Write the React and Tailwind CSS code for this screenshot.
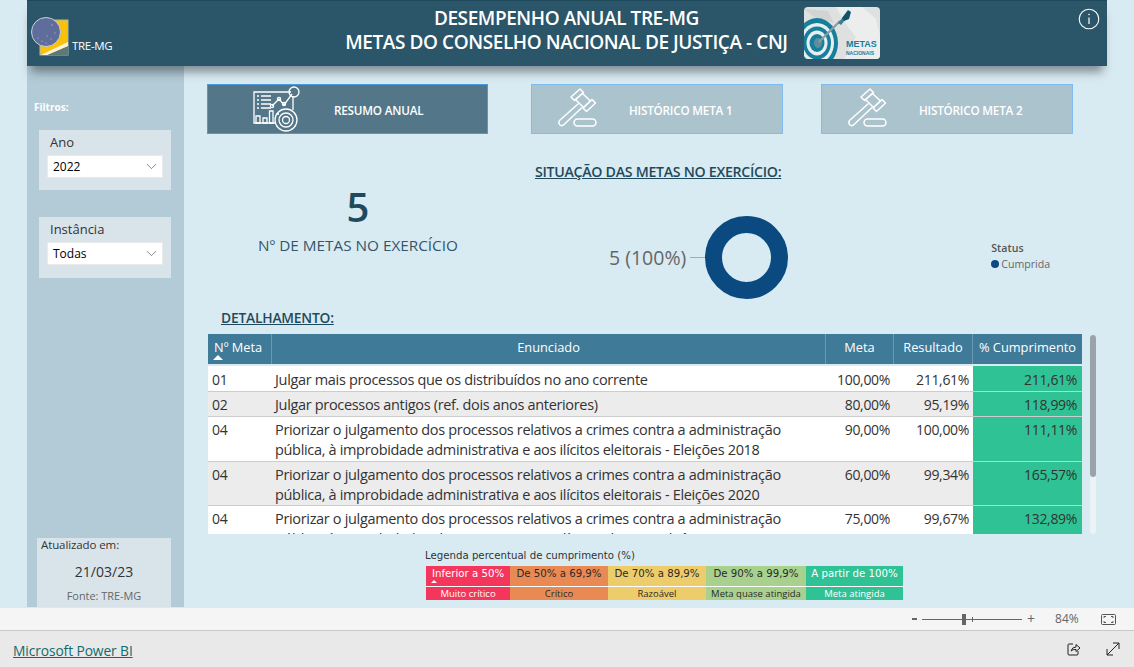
import { ChevronDown } from "lucide-react";

const rows = [
  { n: "01", lines: ["Julgar mais processos que os distribuídos no ano corrente"], meta: "100,00%", res: "211,61%", pct: "211,61%", h: "h-[26px]", pt: "pt-[4px]" },
  { n: "02", lines: ["Julgar processos antigos (ref. dois anos anteriores)"], meta: "80,00%", res: "95,19%", pct: "118,99%", h: "h-[25px]", pt: "pt-[3px]" },
  {
    n: "04",
    lines: [
      "Priorizar o julgamento dos processos relativos a crimes contra a administração",
      "pública, à improbidade administrativa e aos ilícitos eleitorais - Eleições 2018",
    ],
    meta: "90,00%",
    res: "100,00%",
    pct: "111,11%",
    h: "h-[45px]",
    pt: "pt-[3px]",
  },
  {
    n: "04",
    lines: [
      "Priorizar o julgamento dos processos relativos a crimes contra a administração",
      "pública, à improbidade administrativa e aos ilícitos eleitorais - Eleições 2020",
    ],
    meta: "60,00%",
    res: "99,34%",
    pct: "165,57%",
    h: "h-[44px]",
    pt: "pt-[3px]",
  },
  {
    n: "04",
    lines: [
      "Priorizar o julgamento dos processos relativos a crimes contra a administração",
      "pública, à improbidade administrativa e aos ilícitos eleitorais (biênio 2019-2020)",
    ],
    meta: "75,00%",
    res: "99,67%",
    pct: "132,89%",
    h: "h-[44px]",
    pt: "pt-[3px]",
  },
];

const legend = [
  { top: "Inferior a 50%", bottom: "Muito crítico", w: "w-[84px]", bg: "bg-[#f5365c]", text: "text-white", sort: true },
  { top: "De 50% a 69,9%", bottom: "Crítico", w: "w-[98px]", bg: "bg-[#e98a54]", text: "text-[#2a2a2a]" },
  { top: "De 70% a 89,9%", bottom: "Razoável", w: "w-[98px]", bg: "bg-[#edcd6b]", text: "text-[#2a2a2a]" },
  { top: "De 90% a 99,9%", bottom: "Meta quase atingida", w: "w-[100px]", bg: "bg-[#a9d18e]", text: "text-[#2a2a2a]" },
  { top: "A partir de 100%", bottom: "Meta atingida", w: "w-[97px]", bg: "bg-[#2fc294]", text: "text-white" },
];

function Gavel() {
  return (
    <svg width="39" height="39" viewBox="0 0 39 39" fill="none" stroke="white" strokeWidth="1.5" strokeLinejoin="round" strokeLinecap="round">
      <path d="M13 9 L22 1 L25.5 4.5 L16.5 12.5 Z" />
      <path d="M17.5 11.5 L24.5 5.5 L32.5 13 L25.5 19.5 Z" />
      <path d="M25 20 L34 11.5 L37.5 15 L28.5 23.5 Z" />
      <path d="M20 16 L1.5 32.5 Q0 35 2 37 Q4 38.5 6 36.5 L23.5 20" />
      <rect x="16" y="31" width="22" height="7" rx="3.5" />
    </svg>
  );
}

function ChartIcon() {
  return (
    <svg width="48" height="46" viewBox="0 0 48 46" fill="none" stroke="white" strokeWidth="1.3">
      <path d="M38 6 H1 V37 H23" />
      <path d="M40 10 V24" />
      <path d="M4 10 H6 M4 14 H6 M4 18 H6 M4 22 H6" />
      <path d="M8 10 H18 M8 14 H18 M8 18 H18 M8 22 H18" />
      <path d="M3 30 H7 V37 H3 Z M10 32 H14 V37 H10 Z M16.5 25 H20 V37 H16.5 Z M23 28 H26" />
      <path d="M19 20 L26 13 L31 19 L39 8" />
      <circle cx="41" cy="6" r="5" />
      <circle cx="19" cy="20" r="1.6" />
      <circle cx="26" cy="13" r="1.6" />
      <circle cx="31" cy="18" r="1.6" />
      <circle cx="33" cy="34" r="11" />
      <circle cx="33" cy="34" r="7" />
      <circle cx="33" cy="34" r="3.5" />
    </svg>
  );
}

function TreLogo() {
  return (
    <svg width="40" height="44" viewBox="0 0 40 44">
      <rect x="10" y="6" width="28" height="35" fill="#f9c20a" stroke="#aab6b8" />
      <path d="M17 41 L38 32 V41 Z" fill="#5d7876" />
      <path d="M11 41 L38 28 V32 L17 41 Z" fill="#f7f3df" />
      <circle cx="16" cy="18" r="14.5" fill="#5e6d9c" stroke="#c6ced6" strokeWidth="1" />
      <circle cx="22" cy="11" r="0.5" fill="#fff" />
      <circle cx="17" cy="22" r="0.5" fill="#d5dae8" />
      <circle cx="21" cy="25" r="0.5" fill="#d5dae8" />
      <circle cx="12" cy="27" r="0.5" fill="#d5dae8" />
      <circle cx="25" cy="19" r="0.5" fill="#d5dae8" />
      <circle cx="8" cy="24" r="0.5" fill="#d5dae8" />
      <circle cx="16" cy="29" r="0.5" fill="#d5dae8" />
    </svg>
  );
}

function MetasLogo() {
  return (
    <svg width="76" height="52" viewBox="0 0 76 52">
      <defs>
        <clipPath id="metas-clip">
          <rect width="76" height="52" rx="4" />
        </clipPath>
      </defs>
      <g clipPath="url(#metas-clip)">
        <rect width="76" height="52" fill="#dfe1e1" />
        <path d="M32 0 H58 L72 12 L76 28 V52 H40 L52 30 L44 20 Z" fill="#eceded" />
        <path d="M0 2 L24 4 L30 16 L10 10 Z" fill="#d2d4d4" />
        <ellipse cx="13" cy="36" rx="21" ry="25" fill="#157f9c" />
        <ellipse cx="13" cy="36" rx="17" ry="20" fill="#e8eeef" />
        <ellipse cx="13" cy="36" rx="14" ry="16.5" fill="#157f9c" />
        <ellipse cx="13" cy="36" rx="10.5" ry="12.5" fill="#e8eeef" />
        <ellipse cx="13" cy="36" rx="7.5" ry="9" fill="#157f9c" />
        <ellipse cx="14" cy="36" rx="4" ry="5" fill="#5f8d9c" />
        <path d="M15 35 L36 14" stroke="#8b9ca3" strokeWidth="2.2" />
        <path d="M34 16 L40 9 L41 13 L37 18 Z" fill="#3a7f95" />
        <path d="M38 11 L44 3 L47 5 L45 12 L40 14 Z" fill="#0f5468" />
        <text x="42" y="40" fontSize="9" fontWeight="700" fill="#157f9c" fontFamily="'Liberation Sans', sans-serif">METAS</text>
        <text x="42" y="48" fontSize="5" fontWeight="700" fill="#157f9c" fontFamily="'Liberation Sans', sans-serif">NACIONAIS</text>
      </g>
    </svg>
  );
}

function Dropdown({ label, value, cardClass }) {
  return (
    <div className={`mx-3 w-[132px] bg-[#d9e4ea] pr-[8px] pl-2 ${cardClass}`}>
      <div className="pl-[3px] text-[13px] leading-[18px] text-[#333]">{label}</div>
      <div className="mt-[4px] flex h-[23px] items-center justify-between border border-[#eaeaea] bg-white pr-[2px] pl-[5px] text-[12px] text-black">
        <span>{value}</span>
        <ChevronDown size={17} strokeWidth={1} className="text-[#555]" />
      </div>
    </div>
  );
}

function NavButton({ label, active, icon, widthClass, iconClass, textClass }) {
  return (
    <div className={`flex h-[50px] items-center border ${active ? "border-[#4a9ade] bg-[#537789]" : "border-[#7fbdf0] bg-[#abc3cd]"} ${widthClass}`}>
      <div className={`shrink-0 ${iconClass}`}>{icon}</div>
      <span className={`mt-[4px] text-[11.7px] font-semibold tracking-[-0.2px] text-white ${textClass}`}>{label}</span>
    </div>
  );
}

export default function App() {
  return (
    <div className="flex h-[667px] w-[1134px] flex-col overflow-hidden bg-[#d9ebf2] font-['Open_Sans',sans-serif]">
      {/* report canvas */}
      <div className="mx-[27px] flex h-[607px] w-[1080px] shrink-0 flex-col">
        {/* header */}
        <header className="relative z-10 flex h-[66px] shrink-0 items-start border-t border-[#1f4a5c] bg-[#2b5669] shadow-[0_10px_9px_-4px_rgba(40,50,55,0.5)]">
          <div className="mt-[13px] ml-[3px] shrink-0">
            <TreLogo />
          </div>
          <span className="mt-[36px] ml-[2px] text-[11.5px] tracking-[-0.3px] text-white">TRE-MG</span>
          <div className="mt-[5px] ml-[232px] w-[444px] shrink-0 text-center text-[19px] leading-[24px] font-semibold tracking-[-0.42px] text-white">
            <div>DESEMPENHO ANUAL TRE-MG</div>
            <div>METAS DO CONSELHO NACIONAL DE JUSTIÇA - CNJ</div>
          </div>
          <div className="mt-[6px] ml-[16px] shrink-0">
            <MetasLogo />
          </div>
          <svg width="22" height="22" viewBox="0 0 22 22" fill="none" stroke="white" className="mt-[7px] mr-[7px] ml-auto">
            <circle cx="11" cy="11" r="9.8" strokeWidth="1.1" />
            <path d="M11 9.5 V16" strokeWidth="1.2" />
            <circle cx="11" cy="6.5" r="0.8" fill="white" stroke="none" />
          </svg>
        </header>

        <div className="flex min-h-0 flex-1">
          {/* filters */}
          <aside className="flex w-[157px] shrink-0 flex-col bg-[#b2cbd6]">
            <div className="mt-[35px] ml-[7px] text-[10px] leading-[12px] font-bold text-white">Filtros:</div>
            <Dropdown label="Ano" value="2022" cardClass="mt-[17px] h-[60px] pt-[3px]" />
            <Dropdown label="Instância" value="Todas" cardClass="mt-[27px] h-[61px] pt-[3px]" />
            <div className="mt-auto ml-[10px] flex h-[69px] w-[134px] flex-col items-center bg-[#d9e4ea]">
              <div className="w-full pl-[4px] text-[11.5px] leading-[14px] tracking-[-0.1px] text-[#333]">Atualizado em:</div>
              <div className="mt-[11px] text-[14px] leading-[18px] text-[#333]">21/03/23</div>
              <div className="mt-[8px] text-[10.9px] leading-[14px] text-[#666]">Fonte: TRE-MG</div>
            </div>
          </aside>

          {/* content */}
          <main className="min-w-0 flex-1 pl-[23px]">
            <div className="mt-[18px] flex">
              <NavButton label="RESUMO ANUAL" active icon={<ChartIcon />} widthClass="w-[281px]" iconClass="ml-[45px]" textClass="ml-[33px]" />
              <NavButton label="HISTÓRICO META 1" icon={<Gavel />} widthClass="ml-[43px] w-[252px]" iconClass="mb-[3px] ml-[26px]" textClass="ml-[32px]" />
              <NavButton label="HISTÓRICO META 2" icon={<Gavel />} widthClass="ml-[38px] w-[252px]" iconClass="mb-[3px] ml-[26px]" textClass="ml-[32px]" />
            </div>

            <div className="mt-[29px] ml-[328px] text-[14.2px] leading-[18px] font-semibold tracking-[-0.3px] text-[#1f4a5c] underline">
              SITUAÇÃO DAS METAS NO EXERCÍCIO:
            </div>

            {/* kpi and donut */}
            <div className="flex h-[128px] items-start">
              <div className="mt-[2px] flex w-[302px] shrink-0 flex-col items-center">
                <div className="text-[40px] leading-[48px] font-semibold text-[#1f4a5c]">5</div>
                <div className="mt-[4px] text-[15.3px] leading-[20px] text-[#34566a]">Nº DE METAS NO EXERCÍCIO</div>
              </div>
              <div className="mt-[35px] ml-[100px] flex shrink-0 items-center">
                <span className="text-[19.5px] text-[#666]">5 (100%)</span>
                <span className="ml-[4px] h-px w-[15px] bg-[#aaa]" />
                <div className="h-[83px] w-[83px] rounded-full border-[17px] border-[#0b4a80]" />
              </div>
              <div className="mt-[59px] ml-[203px] shrink-0">
                <div className="text-[10.6px] leading-[16px] font-semibold text-[#555]">Status</div>
                <div className="flex items-center text-[10.6px] leading-[16px] text-[#666]">
                  <span className="mr-[2px] h-[8px] w-[8px] rounded-full bg-[#0b4a80]" />
                  Cumprida
                </div>
              </div>
            </div>

            <div className="ml-[14px] text-[13.8px] leading-[18px] font-semibold tracking-[-0.2px] text-[#1f4a5c] underline">DETALHAMENTO:</div>

            {/* table */}
            <div className="mt-[7px] ml-px flex">
              <div className="h-[200px] w-[874px] shrink-0 overflow-hidden bg-white text-[14px] tracking-[-0.33px] text-[#333]">
                <div className="flex h-[32px] border-b-2 border-[#d9ebf2] bg-[#3f7a99] text-[12.8px] tracking-normal text-white">
                  <div className="relative w-[64px] shrink-0 border-r border-[#6a9ab2] pt-[4px] pl-[6px]">
                    Nº Meta
                    <span className="absolute top-[21px] left-[5px] h-0 w-0 border-x-[5px] border-b-[5px] border-x-transparent border-b-white" />
                  </div>
                  <div className="w-[554px] shrink-0 border-r border-[#6a9ab2] pt-[4px] text-center">Enunciado</div>
                  <div className="w-[68px] shrink-0 border-r border-[#6a9ab2] pt-[4px] text-center">Meta</div>
                  <div className="w-[79px] shrink-0 border-r border-[#6a9ab2] pt-[4px] text-center">Resultado</div>
                  <div className="w-[109px] shrink-0 pt-[4px] text-center">% Cumprimento</div>
                </div>
                {rows.map((row, i) => (
                  <div key={i} className={`flex ${row.h} border-b border-[#ccc] leading-[20px] ${i % 2 ? "bg-[#ececec]" : "bg-white"}`}>
                    <div className={`w-[64px] shrink-0 pl-[4px] ${row.pt}`}>{row.n}</div>
                    <div className={`w-[554px] shrink-0 pl-[3px] text-[14.5px] whitespace-nowrap ${row.pt}`}>
                      {row.lines.map((line) => (
                        <div key={line}>{line}</div>
                      ))}
                    </div>
                    <div className={`w-[68px] shrink-0 pr-[4px] text-right ${row.pt}`}>{row.meta}</div>
                    <div className={`w-[79px] shrink-0 pr-[4px] text-right ${row.pt}`}>{row.res}</div>
                    <div className={`w-[109px] shrink-0 bg-[#2fc294] pr-[5px] text-right ${row.pt}`}>{row.pct}</div>
                  </div>
                ))}
              </div>
              <div className="mt-px ml-[8px] h-[199px] w-[6px] rounded-full bg-[#ebf3f7]">
                <div className="h-[142px] rounded-full bg-[#9aa4a8]" />
              </div>
            </div>

            {/* color legend */}
            <div className="mt-[15px] ml-[218px] font-['DejaVu_Sans',sans-serif] text-[10.2px] leading-[14px] text-[#333]">Legenda percentual de cumprimento (%)</div>
            <div className="mt-[3px] ml-[219px] flex">
              {legend.map((item) => (
                <div key={item.top} className={`${item.w} shrink-0 text-center ${item.text}`}>
                  <div className={`relative h-[20px] font-['DejaVu_Sans',sans-serif] text-[10.2px] leading-[16px] whitespace-nowrap ${item.bg}`}>
                    {item.top}
                    {item.sort && <span className="absolute top-[14px] left-[5px] h-0 w-0 border-x-[3px] border-b-[3px] border-x-transparent border-b-white" />}
                  </div>
                  <div className={`h-[14px] border-t border-white text-[9.5px] leading-[13px] whitespace-nowrap ${item.bg}`}>{item.bottom}</div>
                </div>
              ))}
            </div>
          </main>
        </div>
      </div>

      {/* zoom bar */}
      <div className="flex h-[23px] shrink-0 items-center border-t border-[#e2e6e8] bg-[#f5f5f5] text-[#666]">
        <span className="ml-[912px] h-[2px] w-[5px] bg-[#666]" />
        <div className="relative ml-[5px] h-px w-[100px] bg-[#666]">
          <span className="absolute top-[-5px] left-[40px] h-[11px] w-[4px] bg-[#666]" />
          <span className="absolute top-[-2px] left-[50px] h-[5px] w-px bg-[#666]" />
        </div>
        <span className="ml-[5px] text-[14px] leading-none">+</span>
        <span className="ml-[20px] text-[12px]">84%</span>
        <svg width="15" height="11" viewBox="0 0 15 11" fill="none" stroke="#555" className="ml-[22px]">
          <rect x="0.5" y="0.5" width="14" height="10" rx="1" />
          <path d="M3 4 V2.5 H5 M10 2.5 H12 V4 M12 7 V8.5 H10 M5 8.5 H3 V7" />
        </svg>
      </div>

      {/* footer */}
      <footer className="flex min-h-0 flex-1 items-center border-t border-[#c8c8c8] bg-[#e9e9e9]">
        <a href="#" className="mt-[5px] ml-[13px] text-[13.8px] tracking-[-0.1px] text-[#116b6b] underline">Microsoft Power BI</a>
        <svg width="14" height="14" viewBox="0 0 14 14" fill="none" stroke="#222" strokeWidth="1" className="ml-auto">
          <path d="M6 2 H2 Q1 2 1 3 V12 Q1 13 2 13 H10 Q11 13 11 12 V9" />
          <path d="M4 9 Q5 5 9 5 V2.5 L13 6 L9 9.5 V7.5 Q6 7 4 9 Z" />
        </svg>
        <svg width="14" height="14" viewBox="0 0 14 14" fill="none" stroke="#222" strokeWidth="1" className="mr-[14px] ml-[25px]">
          <path d="M1 13 L13 1 M7 1 H13 V7 M1 7 V13 H7" />
        </svg>
      </footer>
    </div>
  );
}
